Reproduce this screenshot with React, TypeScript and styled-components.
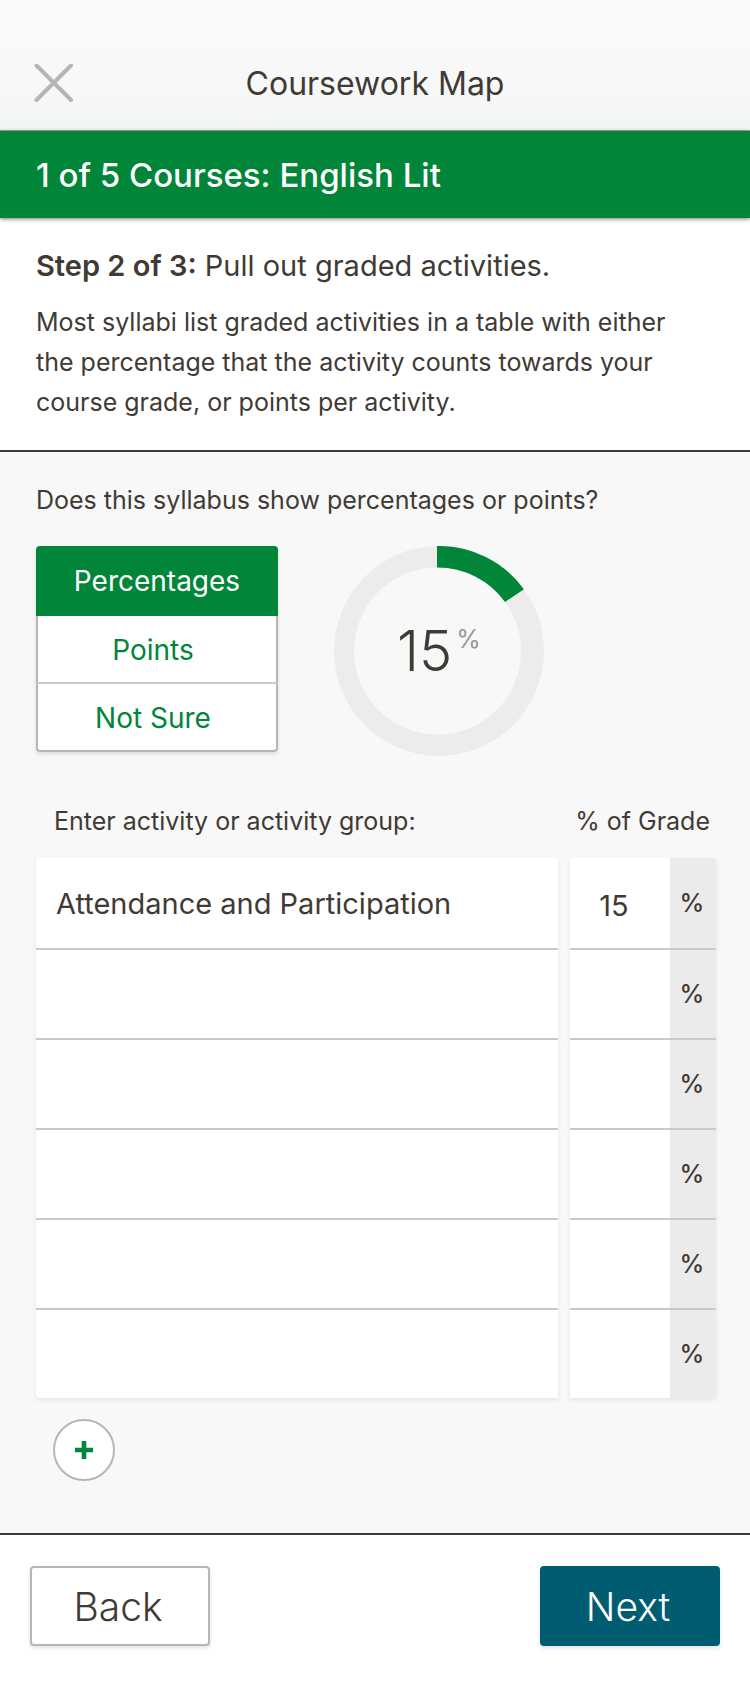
import React, { useState } from "react";
import styled, { createGlobalStyle, css } from "styled-components";

const ink = "#3f3b34";
const green = "#008539";
const teal = "#005c70";
const line = "#b6b6b6";
const rule = "#cacaca";
const wash = "#f8f8f8";
const track = "#ececec";

const GlobalStyle = createGlobalStyle`
  *, *::before, *::after { box-sizing: border-box; }
  body {
    margin: 0;
    background: #fff;
    color: ${ink};
    font-family: Inter, "Liberation Sans", sans-serif;
    font-size: 25px;
    line-height: 40px;
  }
  button, input { font: inherit; color: inherit; }
`;

const Page = styled.div`
  display: flex;
  flex-direction: column;
  min-height: 100vh;
`;

const TopBar = styled.header`
  display: grid;
  grid-template-columns: 40px 1fr 40px;
  align-items: center;
  padding: 64px 34px 26px;
  border-bottom: 1px solid #a9a9a9;
  background: linear-gradient(#f9f9f9 35%, #f4f6f5);
`;

const CloseButton = styled.button`
  display: flex;
  padding: 0;
  border: 0;
  background: none;
  cursor: pointer;
`;

const PageTitle = styled.h1`
  margin: 0;
  font-size: 32px;
  font-weight: 400;
  line-height: 40px;
  text-align: center;
`;

const CourseBanner = styled.h2`
  position: relative;
  margin: 0;
  padding: 24px 36px 23px;
  background: ${green};
  box-shadow: 0 1px 4px rgba(40, 30, 30, 0.6);
  color: #fff;
  font-size: 33px;
  font-weight: 500;
`;

const Intro = styled.section`
  padding: 28px 36px 28px;
  border-bottom: 2px solid ${ink};
`;

const StepTitle = styled.h3`
  margin: 0 0 16px;
  font-size: 29px;
  font-weight: 400;

  strong { font-weight: 600; }
`;

const IntroText = styled.p`
  max-width: 640px;
  margin: 0;
`;

const Workspace = styled.main`
  flex: 1;
  padding: 28px 34px 52px 36px;
  background: ${wash};
`;

const Question = styled.h4`
  margin: 0 0 26px;
  font-size: 25px;
  font-weight: 400;
`;

const FormatRow = styled.div`
  display: flex;
  align-items: flex-start;
  gap: 56px;
`;

const OptionGroup = styled.div`
  display: flex;
  flex-direction: column;
  width: 242px;
  border-radius: 4px;
  box-shadow: 0 2px 4px rgba(0, 0, 0, 0.12);
`;

const Option = styled.label<{ $selected: boolean }>`
  display: flex;
  align-items: center;
  justify-content: center;
  height: 68px;
  padding-top: 2px;
  border: 2px solid ${line};
  border-top-width: 0;
  background: #fff;
  color: ${green};
  font-size: 28px;
  cursor: pointer;

  &:not(:last-child) { border-bottom-color: ${rule}; }
  &:first-child { height: 70px; border-radius: 4px 4px 0 0; }
  &:last-child { border-radius: 0 0 4px 4px; }

  ${(p) =>
    p.$selected
      ? css`
          && { border-color: ${green}; }
          background: ${green};
          color: #fff;
        `
      : css`
          padding-right: 8px;
        `}
`;

const HiddenRadio = styled.input`
  position: absolute;
  opacity: 0;
  pointer-events: none;
`;

const Gauge = styled.div`
  display: grid;
  place-items: center;

  > * { grid-area: 1 / 1; }
`;

const GaugeLabel = styled.div`
  display: flex;
  align-items: flex-start;
  gap: 4px;
  font-size: 56px;
  font-weight: 300;
  line-height: 64px;

  span {
    color: #979797;
    font-size: 25px;
    font-weight: 400;
    line-height: 40px;
  }
`;

const ActivityTable = styled.table`
  width: calc(100% + 24px);
  margin: 34px -12px 0;
  border-collapse: separate;
  border-spacing: 12px 0;
  table-layout: fixed;
`;

const HeadCell = styled.th<{ $end?: boolean }>`
  width: ${(p) => (p.$end ? "146px" : "auto")};
  padding: ${(p) => (p.$end ? "11px 6px 17px 0" : "11px 0 17px 18px")};
  font-weight: 400;
  text-align: ${(p) => (p.$end ? "right" : "left")};
  white-space: nowrap;
`;

const Cell = styled.td`
  height: 90px;
  padding: 0;
  border-bottom: 2px solid ${rule};
  background: #fff;
  box-shadow: 0 2px 4px rgba(0, 0, 0, 0.08);

  tr:first-child > & { height: 92px; }
  tr:last-child > & { height: 88px; border-bottom: 0; }
  tr:first-child > &:first-child { border-top-left-radius: 4px; }
  tr:last-child > &:first-child { border-bottom-left-radius: 4px; }
  tr:first-child > &:last-child { border-top-right-radius: 4px; }
  tr:last-child > &:last-child { border-bottom-right-radius: 4px; }
`;

const GradeCell = styled(Cell)`
  background: linear-gradient(to right, #fff 100px, #ebebeb 100px);
`;

const GradeEntry = styled.label`
  display: grid;
  grid-template-columns: 100px 44px;
  align-items: center;
  font-weight: 500;
  text-align: center;
`;

const Field = styled.input<{ $numeric?: boolean }>`
  display: block;
  width: 100%;
  height: 88px;
  padding: ${(p) => (p.$numeric ? "4px 12px 0 0" : "0 20px 0 20px")};
  border: 0;
  outline: 0;
  background: none;
  font-size: 29px;
  font-weight: 400;
  text-align: ${(p) => (p.$numeric ? "center" : "left")};
`;

const AddButton = styled.button`
  display: flex;
  align-items: center;
  justify-content: center;
  width: 62px;
  height: 62px;
  margin: 21px 0 0 17px;
  padding: 0;
  border: 2px solid ${line};
  border-radius: 50%;
  background: #fff;
  cursor: pointer;
`;

const Footer = styled.footer`
  display: flex;
  justify-content: space-between;
  padding: 31px 30px 38px;
  border-top: 2px solid ${ink};
  background: #fff;
`;

const NavButton = styled.button<{ $primary?: boolean }>`
  width: 180px;
  height: 80px;
  padding: 2px 4px 0 0;
  border: 2px solid ${(p) => (p.$primary ? teal : line)};
  border-radius: 4px;
  background: ${(p) => (p.$primary ? teal : "#fff")};
  box-shadow: 0 2px 4px rgba(0, 0, 0, 0.12);
  color: ${(p) => (p.$primary ? "#fff" : ink)};
  font-size: 39px;
  font-weight: 300;
  cursor: pointer;
`;

const arcPath = (percent: number) => {
  const share = Math.min(Math.max(percent, 0), 99.9) / 100;
  const a = share * 2 * Math.PI;
  const large = share > 0.5 ? 1 : 0;
  const ox = 105 + 105 * Math.sin(a);
  const oy = 105 - 105 * Math.cos(a);
  const ix = 103.5 + 83.5 * Math.sin(a);
  const iy = 105 - 83.5 * Math.cos(a);
  return `M103 0 A105 105 0 ${large} 1 ${ox} ${oy} L${ix} ${iy} A83.5 83.5 0 ${large} 0 103 21.5 Z`;
};

function Donut({ percent }: { percent: number }) {
  return (
    <svg width="210" height="210" viewBox="0 0 210 210" aria-hidden="true">
      <path
        fill={track}
        fillRule="evenodd"
        d="M105 0a105 105 0 1 1 0 210a105 105 0 1 1 0-210Z M103.5 21.5a83.5 83.5 0 1 0 0 167a83.5 83.5 0 1 0 0-167Z"
      />
      {percent > 0 && <path fill={green} d={arcPath(percent)} />}
    </svg>
  );
}

const formats = ["Percentages", "Points", "Not Sure"];

const startRows = [
  { name: "Attendance and Participation", grade: "15" },
  ...Array.from({ length: 5 }, () => ({ name: "", grade: "" })),
];

export default function App() {
  const [format, setFormat] = useState(formats[0]);
  const [rows, setRows] = useState(startRows);
  const total = rows.reduce((sum, row) => sum + (Number(row.grade) || 0), 0);

  const update = (index: number, change: Partial<(typeof rows)[number]>) =>
    setRows(rows.map((row, i) => (i === index ? { ...row, ...change } : row)));

  return (
    <>
      <GlobalStyle />
      <Page>
        <TopBar>
          <CloseButton type="button" aria-label="Close">
            <svg width="40" height="40" viewBox="0 0 40 40" stroke="#b5b5b7" strokeWidth="4" strokeLinecap="round">
              <path d="M2.5 1.5 37 36M37 1.5 2.5 36" />
            </svg>
          </CloseButton>
          <PageTitle>Coursework Map</PageTitle>
        </TopBar>

        <CourseBanner>1 of 5 Courses: English Lit</CourseBanner>

        <Intro>
          <StepTitle>
            <strong>Step 2 of 3:</strong> Pull out graded activities.
          </StepTitle>
          <IntroText>
            Most syllabi list graded activities in a table with either the percentage that the
            activity counts towards your course grade, or points per activity.
          </IntroText>
        </Intro>

        <Workspace>
          <Question id="format-question">Does this syllabus show percentages or points?</Question>
          <FormatRow>
            <OptionGroup role="radiogroup" aria-labelledby="format-question">
              {formats.map((name) => (
                <Option key={name} $selected={name === format}>
                  <HiddenRadio
                    type="radio"
                    name="format"
                    checked={name === format}
                    onChange={() => setFormat(name)}
                  />
                  {name}
                </Option>
              ))}
            </OptionGroup>
            <Gauge>
              <Donut percent={total} />
              <GaugeLabel>
                {total}
                <span>%</span>
              </GaugeLabel>
            </Gauge>
          </FormatRow>

          <ActivityTable>
            <thead>
              <tr>
                <HeadCell scope="col">Enter activity or activity group:</HeadCell>
                <HeadCell scope="col" $end>% of Grade</HeadCell>
              </tr>
            </thead>
            <tbody>
              {rows.map((row, i) => (
                <tr key={i}>
                  <Cell>
                    <Field
                      aria-label={`Activity ${i + 1}`}
                      value={row.name}
                      onChange={(e) => update(i, { name: e.target.value })}
                    />
                  </Cell>
                  <GradeCell>
                    <GradeEntry>
                      <Field
                        $numeric
                        inputMode="numeric"
                        aria-label={`Percent of grade for activity ${i + 1}`}
                        value={row.grade}
                        onChange={(e) => update(i, { grade: e.target.value })}
                      />
                      %
                    </GradeEntry>
                  </GradeCell>
                </tr>
              ))}
            </tbody>
          </ActivityTable>

          <AddButton
            type="button"
            aria-label="Add activity"
            onClick={() => setRows([...rows, { name: "", grade: "" }])}
          >
            <svg width="18" height="18" viewBox="0 0 18 18" stroke={green} strokeWidth="4.6">
              <path d="M9 0V18M0 9H18" />
            </svg>
          </AddButton>
        </Workspace>

        <Footer>
          <NavButton type="button">Back</NavButton>
          <NavButton type="button" $primary>Next</NavButton>
        </Footer>
      </Page>
    </>
  );
}
